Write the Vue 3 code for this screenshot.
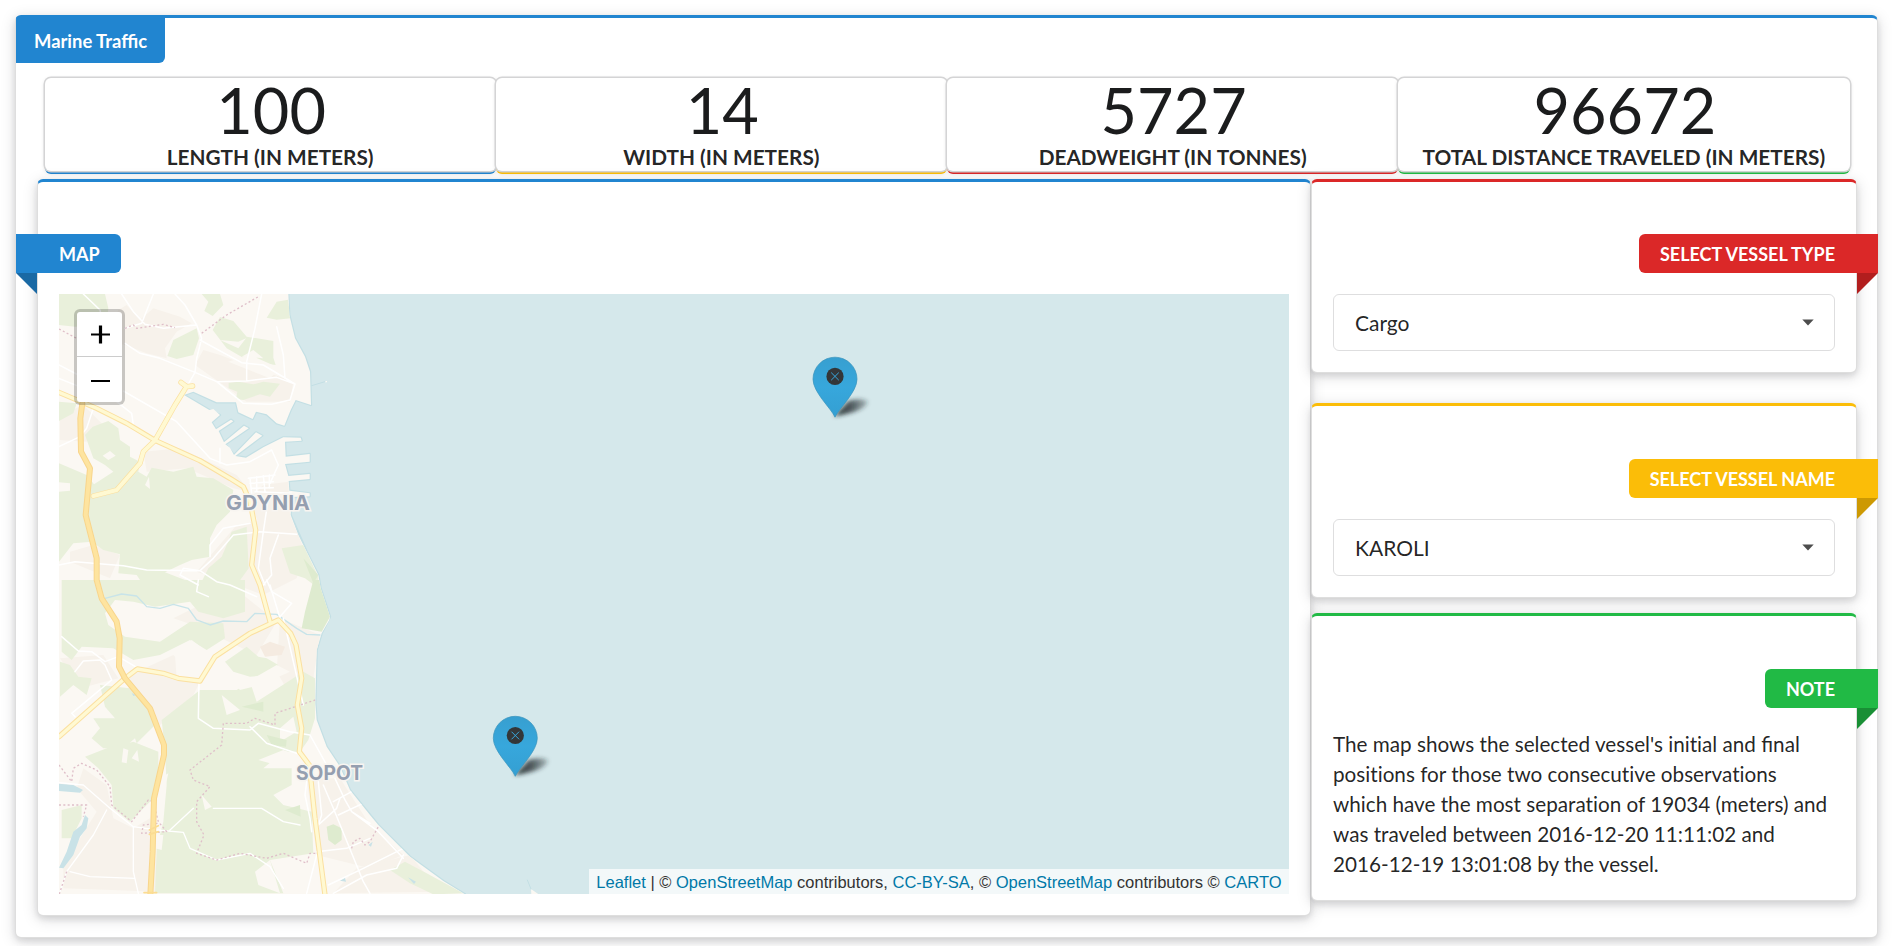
<script setup>
const stats = [
  { value: '100', label: 'LENGTH (IN METERS)', color: 'blue' },
  { value: '14', label: 'WIDTH (IN METERS)', color: 'yellow' },
  { value: '5727', label: 'DEADWEIGHT (IN TONNES)', color: 'red' },
  { value: '96672', label: 'TOTAL DISTANCE TRAVELED (IN METERS)', color: 'green' },
]
const selects = [
  { title: 'SELECT VESSEL TYPE', value: 'Cargo', color: 'red' },
  { title: 'SELECT VESSEL NAME', value: 'KAROLI', color: 'yellow' },
]
const markers = [
  { x: 835, y: 417.2 },
  { x: 515.3, y: 776.3 },
]
</script>

<template>
  <main class="segment page blue">
    <div class="corner-label">Marine Traffic</div>

    <section class="stats">
      <div v-for="s in stats" :key="s.label" class="stat" :class="s.color">
        <div class="stat-value">{{ s.value }}</div>
        <div class="stat-label">{{ s.label }}</div>
      </div>
    </section>

    <section class="columns">
      <article class="segment map-card blue">
        <div class="ribbon left">MAP</div>
        <div class="map">
          <svg class="map-canvas" viewBox="59 294 1230 600" width="1230" height="600">
            <defs>
              <filter id="soft" x="-50%" y="-50%" width="200%" height="200%">
                <feGaussianBlur stdDeviation="1.9" />
              </filter>
              <linearGradient id="shade" x1="0" y1="0" x2="1" y2="0">
                <stop offset="0" stop-color="#20292c" stop-opacity=".9" />
                <stop offset=".5" stop-color="#20292c" stop-opacity=".75" />
                <stop offset="1" stop-color="#20292c" stop-opacity=".25" />
              </linearGradient>
              <linearGradient id="pin" x1="0" y1="0" x2="0" y2="1">
                <stop offset="0" stop-color="#379fd0" />
                <stop offset=".5" stop-color="#37a7dc" />
                <stop offset="1" stop-color="#349fd2" />
              </linearGradient>
              <clipPath id="coast">
                <path d="M0 0H714L718 90L735 160L765 215L780 260L783 360L737 345L722 375L703 422L680 415L650 388L618 380L608 402L565 382L558 352L500 352L430 320L402 330L478 375L490 372L510 390L485 412L498 433L543 404L550 409L506 438L522 472L582 422L596 430L526 478L540 488L552 510L618 442L637 452L556 513L588 518L640 487L700 457L752 458L755 467L705 470L707 515L779 507V530L705 537L715 573L779 567V582L716 588L718 617L779 625V634L724 636L722 690L745 750L770 800L805 870L812 910L840 995L838 1005L815 1045L800 1095L796 1255L800 1305L830 1385L870 1445L900 1515L960 1590L985 1620L1080 1715L1180 1788L1245 1828H0Z" />
              </clipPath>
            </defs>
            <rect x="59" y="294" width="1230" height="600" fill="#d5e8eb" />
            <g transform="translate(50 285) scale(.33333)" fill="none" stroke-linejoin="round" stroke-linecap="round">
              <path d="M714 20L718 90L735 160L765 215L780 260L783 360L737 345L722 375L703 422L680 415L650 388L618 380L608 402L565 382L558 352L500 352L430 320L402 330L478 375L510 390L485 412L498 433L543 404L550 409L506 438L522 472L582 422L596 430L526 478L552 510L618 442L637 452L556 513L588 518L640 487L700 457L752 458L755 467L705 470L707 515L779 507V530L705 537L715 573L779 567V582L716 588L718 617L779 625V634L724 636L722 690L770 800L805 870L812 910L840 995L815 1045L800 1095L796 1255L800 1305L830 1385L870 1445L900 1515L985 1620L1080 1715L1180 1788L1245 1828" stroke="#c3dfe4" stroke-width="7" />
              <g clip-path="url(#coast)">
                <rect width="1260" height="1840" fill="#fbf8f3" />
                <g fill="#f7f2eb">
                  <path d="M160 170L205 75L230 60L270 105L310 70L390 95L425 115L380 140L345 190L350 220L290 205L225 180ZM435 240L460 195L510 210L590 240L730 290L720 350L590 350L520 300ZM30 390L100 360L160 420L110 470L30 465ZM280 500L390 490L560 570L600 620L550 610L410 550L290 560ZM60 800L130 780L210 810L180 880L60 830ZM440 860L560 720L720 690L765 800L740 880L640 930L560 900ZM640 600L715 590L720 690L630 730L600 640Z" />
                  <path d="M370 1000L450 960L580 930L680 1010L620 1110L430 1020ZM690 1000L810 1050L790 1180L750 1280L680 1160ZM240 1170L370 1110L450 1190L430 1230L330 1320L230 1240ZM30 1120L160 1110L205 1180L90 1210ZM100 1450L170 1500L190 1600L250 1630L300 1600L330 1820L40 1810L40 1740L140 1580L80 1510ZM770 1480L870 1480L960 1620L1060 1710L960 1750L800 1710Z" />
                  <path d="M815 1600L930 1580L1010 1680L860 1690ZM920 1750L1080 1710L1170 1820L850 1825Z" />
                </g>
                <g fill="#e9f0db">
                  <path d="M27 27H165L175 70L170 120L75 125L27 120ZM455 27H510L520 60L488 93L463 78L475 50ZM650 98L680 50L714 44L722 100L680 104ZM488 135L510 96L550 108L590 155L670 168V218L677 240L600 230L530 190ZM370 165L440 130L447 160L430 210L380 222L352 213ZM536 294L565 290L610 298L640 290L690 296L660 335L630 328L580 345L558 342L562 320L536 310ZM27 350L80 355L70 385L27 408Z" />
                  <path d="M105 450L128 425L175 408L205 430L210 465L240 485L240 515L270 530L265 560L290 575L305 548L370 560L430 545L440 575L490 580L550 615L540 680L500 720L480 760L480 815L425 825L390 840L345 862L405 885L440 900L280 900L260 870L205 865L210 808L160 795L125 770L70 775L27 830V620L60 617V595L27 592V535L110 570L132 598L190 560L165 540L130 520Z" />
                  <path d="M515 815L530 780L545 740L590 725L596 850L560 900H450L475 850ZM695 790L760 780L805 875V910L765 880L720 865Z" />
                  <path d="M35 885H490L585 885V980L520 1000L445 980L420 950L315 965L250 950L195 945L165 985L175 1020L225 1055L330 1070L420 1010L520 1015L525 1060L470 1095L420 1065L330 1110L250 1125L190 1090L95 1085L65 1125L35 1100ZM150 1200L240 1210L300 1280L315 1320L260 1375L255 1360L220 1390L160 1390L125 1360L150 1330L130 1300L195 1300L165 1265Z" />
                  <path d="M525 1130L590 1085L625 1115L650 1120L685 1140L660 1170L600 1175L550 1160ZM335 1305L450 1215L560 1215L600 1190L620 1250L760 1160L795 1180V1300L775 1365L750 1400L700 1400L640 1450L725 1450V1500L670 1530L700 1560L785 1580L790 1705L660 1725L700 1825H315L320 1690L340 1610L350 1500L345 1400Z" />
                  <path d="M105 1415L170 1390L250 1370L325 1400L325 1520L305 1545L240 1610L190 1570L185 1500L145 1450ZM30 1130L60 1140L85 1175L125 1180L110 1230L70 1200L30 1235ZM35 1575L95 1560L95 1600L65 1660L35 1660ZM1020 1755L1065 1730L1130 1765L1240 1825L1150 1828L1080 1795Z" />
                </g>
                <g fill="#fbf8f3">
                  <path d="M158 512L180 498L197 512L175 525ZM565 170L588 160L565 190L510 165ZM575 215L610 195L640 220ZM285 600L297 575L300 612ZM535 230L600 210L690 250L660 280ZM220 1390L235 1395L230 1435L215 1432ZM262 1395L267 1430L245 1420ZM515 1230L570 1275L530 1290ZM455 1530L485 1565L465 1575ZM330 1480L355 1465L345 1510ZM340 980L360 975L345 990Z" />
                  <path d="M625 1425L700 1395L740 1410L730 1450L660 1435ZM690 1330L730 1295L740 1340L690 1370ZM530 1170L610 1180L680 1140L720 1160L630 1200L570 1215ZM615 1760L660 1725L690 1825L625 1800ZM375 1110L425 1065L465 1095L455 1190L380 1180ZM310 1650L340 1650L335 1695L315 1690Z" />
                </g>
                <g fill="#deebcf">
                  <path d="M765 980L790 885H812L840 995L815 1040L755 1030ZM830 1625L850 1618L875 1630L875 1665L855 1680L835 1665ZM650 1350L710 1365L708 1385L665 1380ZM705 1575L750 1560L752 1595ZM575 1265L640 1250L640 1280ZM760 820L805 870L790 895Z" />
                </g>
                <path fill="#f5ebe1" d="M630 1085L660 1070L705 1085L695 1110L645 1115Z" />
                <g fill="#c9e2e7">
                  <path d="M27 1496L70 1500L99 1515L90 1523L27 1518ZM105 1590L115 1600L110 1630L90 1655L70 1710L40 1750L27 1748L50 1700L70 1640L95 1620ZM870 1787L885 1778L888 1790ZM245 1225L262 1230L250 1233ZM1074 1777L1098 1790L1092 1797ZM955 1680L968 1670L963 1685Z" />
                </g>
                <path stroke="#c8e4e9" stroke-width="4" d="M165 940L215 927L260 933L290 965L330 970L370 958L415 970L440 1005L480 1020L520 1008L590 1010L615 985L680 988L740 1030L770 1048L810 1050" />
                <g stroke="#ffffff" stroke-width="4.5">
                  <path d="M100 27L150 75L160 130M215 27L250 80L285 118L340 130L440 120L455 160L440 220L435 262L405 315M310 27L275 115L225 130M375 27L405 60L440 120M635 27L615 130L590 230V285M450 165L575 233L640 240L735 297L720 345L665 358L580 355L500 290L435 262L330 220L270 205L225 175M500 290L590 288L680 277L735 297M680 125L700 210L705 280" />
                  <path d="M27 240L85 270M27 280L200 350L245 385L250 420M220 318L380 410L480 520L530 540L600 530L665 495M665 495L685 540L660 595M27 485L90 455L110 430L130 370M510 490V535M595 580L675 570M600 595L670 590M605 610L670 608M600 580L605 625M620 575V620M640 572L645 620M658 570V610M615 620L724 625M655 640L640 740L625 850L645 900" />
                  <path d="M27 840L75 830L220 842L290 855L450 857L490 820L550 750L630 740L740 748M600 715L520 730L480 780L480 815M450 857L400 850L390 870L445 900M450 857L500 890L540 900L620 935M685 750L660 820L665 870L640 900" />
                  <path d="M35 1055L85 1098L125 1100L165 1130L205 1115L265 1150M75 1160L100 1128L150 1125L165 1140L185 1185L65 1285L75 1295M447 1190L445 1300L490 1330L600 1335L625 1315L720 1340L780 1350L830 1440M600 1325L650 1375L740 1405M445 885L440 920L475 935M650 885L665 920L725 955L690 995" />
                  <path d="M27 1493L100 1500L180 1570L250 1625L320 1635L400 1642L420 1690L500 1725L600 1705L660 1745L700 1810M170 1575L130 1650L50 1760L30 1820M250 1625V1760L265 1825M60 1760L120 1775L255 1780M360 1635L430 1570M490 1570L530 1570L635 1570L700 1610L750 1620" stroke-width="4" />
                  <path d="M770 1490L765 1530L780 1600L785 1640M805 1490L815 1590L805 1620L860 1570L870 1540M820 1500L850 1570L940 1790L960 1825M855 1480L885 1545L905 1580L960 1615M850 1550L905 1520M800 1700L890 1690L960 1660M800 1710L770 1825M835 1800L940 1750L1060 1690M850 1825L950 1770L1040 1750L1060 1710M905 1580L985 1640L1060 1720M865 1590L950 1550M660 900L690 1000L740 1090M700 1000L760 1260" />
                </g>
                <g stroke="#dfbfc9" stroke-width="4" stroke-dasharray="6 7" stroke-linecap="butt">
                  <path d="M27 132L80 160M455 145L530 90L625 35M225 130L250 120L260 130L340 118L375 128" />
                  <path d="M796 1245L675 1285V1320L615 1300L590 1315L520 1315L515 1380L420 1455L430 1485L480 1505L440 1550V1610L462 1650L440 1705L500 1725L570 1705L650 1720L700 1705L770 1735L780 1705L800 1705M27 1440L65 1490L70 1450L95 1435L140 1455L180 1505L185 1560L245 1610L295 1545L310 1550L325 1610L350 1640L275 1645L280 1620L325 1615M27 1560L110 1560L100 1595M50 1760L27 1830M905 1690L910 1670L930 1660L945 1680L960 1670L985 1625" />
                </g>
                <g stroke="#fbe0a0" stroke-width="16">
                  <path d="M27 322L140 370L230 415L315 466L450 527L540 580L580 605L600 650L617 735L605 840L630 900L660 1010" />
                  <path d="M405 312L375 360L315 466L280 500L270 535L200 615L130 633M393 292L410 305L428 303" />
                  <path d="M27 1355L225 1180L262 1152L340 1165L385 1180L450 1188L495 1115L600 1045L685 1005L722 1045L738 1080L755 1180L742 1260L755 1330L748 1400L778 1440L795 1600L825 1830" />
                </g>
                <g stroke="#fff9d2" stroke-width="10">
                  <path d="M27 322L140 370L230 415L315 466L450 527L540 580L580 605L600 650L617 735L605 840L630 900L660 1010" />
                  <path d="M405 312L375 360L315 466L280 500L270 535L200 615L130 633M393 292L410 305L428 303" stroke-width="12" />
                  <path d="M27 1355L225 1180L262 1152L340 1165L385 1180L450 1188L495 1115L600 1045L685 1005L722 1045L738 1080L755 1180L742 1260L755 1330L748 1400L778 1440L795 1600L825 1830" />
                </g>
                <path stroke="#f8d58c" stroke-width="18" d="M97 355L91 400L93 500L120 550L107 690L140 820V885L155 940L200 1010L209 1060L207 1145L225 1180L300 1270L342 1380V1410L312 1540L308 1700L301 1830" />
                <path stroke="#fee49f" stroke-width="12" d="M97 355L91 400L93 500L120 550L107 690L140 820V885L155 940L200 1010L209 1060L207 1145L225 1180L300 1270L342 1380V1410L312 1540L308 1700L301 1830" />
                <path stroke="#fbdc92" stroke-width="5" d="M298 1635L325 1622M298 1648L325 1640M282 1823H320" />
              </g>
              <path fill="#fbf8f3" d="M1443 1812L1466 1828H1444ZM825 288H831V292H825Z" />
              <path stroke="#c3dfe4" stroke-width="3" d="M1432 1785L1443 1812M785 302L825 290" />
            </g>
            <g class="place">
              <text x="226" y="510" textLength="84" lengthAdjust="spacingAndGlyphs">GDYNIA</text>
              <text x="296" y="779.8" textLength="67" lengthAdjust="spacingAndGlyphs">SOPOT</text>
            </g>
            <g v-for="m in markers" :key="m.x" :transform="`translate(${m.x} ${m.y})`">
              <path d="M-1 -1L13 -16Q25 -20 33 -16Q31 -9 18 -5Q8 -2 -1 -1Z" fill="url(#shade)" filter="url(#soft)" />
              <path d="M0 0C-4 -9 -22 -25 -22 -38A22 22 0 0 1 22 -38C22 -25 4 -9 0 0Z" fill="url(#pin)" stroke="#3a93bc" stroke-width=".7" />
              <circle cy="-40.8" r="8.6" fill="#333638" />
              <path d="M-3.8 -44.6L3.8 -37M3.8 -44.6L-3.8 -37" stroke="#37a7dc" stroke-width="1" />
            </g>
          </svg>

          <div class="zoom">
            <div class="zoom-btn">
              <svg width="19" height="19" viewBox="0 0 19 19"><path d="M0 9.5H19" stroke="#000" stroke-width="2" /><path d="M9.5 .5V18.5" stroke="#000" stroke-width="3.2" /></svg>
            </div>
            <div class="zoom-btn">
              <svg width="19" height="19" viewBox="0 0 19 19"><path d="M0 10H19" stroke="#000" stroke-width="2" /></svg>
            </div>
          </div>
          <div class="attribution"><a>Leaflet</a> | © <a>OpenStreetMap</a> contributors, <a>CC-BY-SA</a>, © <a>OpenStreetMap</a> contributors © <a>CARTO</a></div>
        </div>
      </article>

      <div class="side">
        <article v-for="s in selects" :key="s.title" class="segment side-card" :class="s.color">
          <div class="ribbon right">{{ s.title }}</div>
          <div class="dropdown">
            <span>{{ s.value }}</span>
            <svg width="12" height="7" viewBox="0 0 12 7"><path d="M.3 .5H11.7L6 6.6Z" fill="#4d4d4d" /></svg>
          </div>
        </article>
        <article class="segment side-card note green">
          <div class="ribbon right">NOTE</div>
          <p class="note-text">The map shows the selected vessel's initial and <span class="lig">final</span> positions for those two consecutive observations which have the most separation of 19034 (meters) and was traveled between 2016-12-20 11:11:02 and 2016-12-19 13:01:08 by the vessel.</p>
        </article>
      </div>
    </section>
  </main>
</template>

<style>
html {
  background: #fff;
  overflow: hidden;
}
#app {
  display: flow-root;
}
</style>

<style scoped>
* {
  box-sizing: border-box;
}
.blue { --c: #2185d0; --dark: #1a69a4; }
.red { --c: #db2828; --dark: #b21e1e; }
.yellow { --c: #fbbd08; --dark: #cd9903; }
.green { --c: #21ba45; --dark: #198f35; }

.segment {
  position: relative;
  background: #fff;
  border: 1px solid rgba(34, 36, 38, .15);
  border-top: 3px solid var(--c);
  border-radius: 6px;
  box-shadow: 0 3px 6px 0 rgba(34, 36, 38, .12), 0 3px 15px 0 rgba(34, 36, 38, .15);
}
.page {
  width: 1863px;
  height: 923px;
  margin: 15px 0 8px 15px;
  padding: 60px 20px 0 21px;
  font-family: Lato, "Liberation Sans", sans-serif;
  font-size: 21px;
  line-height: 30px;
  color: rgba(0, 0, 0, .87);
}
.corner-label {
  position: absolute;
  left: 0;
  top: -2px;
  width: 149px;
  height: 47px;
  padding: 16px 0 0 18px;
  border-radius: 4px 0 6px 0;
  background: #2185d0;
  color: #fff;
  font-size: 18.4px;
  font-weight: 700;
  line-height: 18px;
  white-space: nowrap;
}
.stats {
  display: flex;
  height: 93px;
  margin: 0 7.5px 8px;
}
.stat {
  flex: 1 1 0;
  text-align: center;
  background: #fff;
  border-radius: 6px;
  box-shadow: 0 0 0 1.5px #d4d4d5, 0 3px 0 0 var(--c), 0 1.5px 4.5px 0 #d4d4d5;
  white-space: nowrap;
}
.stat-value {
  padding-left: 2px;
  font-size: 63px;
  line-height: 63px;
  color: #1b1c1d;
}
.stat-label {
  padding-top: 1px;
  font-size: 20.8px;
  font-weight: 700;
  line-height: 30px;
}
.columns {
  display: flex;
  align-items: flex-start;
}
.map-card {
  width: 1274px;
  height: 737px;
  padding: 52px 20px 0 21px;
}
.side {
  width: 546px;
  flex: none;
  display: flex;
  flex-direction: column;
}
.side-card {
  padding: 52px 21px 21px;
}
.side-card + .side-card {
  margin-top: 30px;
  padding-top: 53px;
}
.side-card + .side-card.note {
  margin-top: 15px;
}
.ribbon {
  position: relative;
  width: max-content;
  height: 39px;
  margin-bottom: 21px;
  background: var(--c);
  color: #fff;
  font-size: 18px;
  font-weight: 700;
  line-height: 18px;
  white-space: nowrap;
}
.ribbon::after {
  content: "";
  position: absolute;
  top: 100%;
  width: 21px;
  height: 21px;
  background: var(--dark);
}
.ribbon.left {
  margin-left: -43px;
  padding: 10.5px 21px 10.5px 43px;
  border-radius: 0 6px 6px 0;
}
.ribbon.left::after {
  left: 0;
  clip-path: polygon(0 0, 100% 0, 100% 100%);
}
.ribbon.right {
  margin-left: auto;
  margin-right: -43px;
  padding: 10.5px 43px 10.5px 21px;
  border-radius: 6px 0 0 6px;
}
.ribbon.right::after {
  right: 0;
  clip-path: polygon(0 0, 100% 0, 0 100%);
}
.map {
  position: relative;
  width: 1230px;
  height: 600px;
  overflow: hidden;
}
.map-canvas {
  display: block;
}
.place {
  font-family: Inter, sans-serif;
  font-size: 20px;
  font-weight: 700;
  fill: #959fb0;
  stroke: #f8f5f1;
  stroke-width: 3px;
  paint-order: stroke;
}
.zoom {
  position: absolute;
  left: 15px;
  top: 15px;
  width: 51px;
  height: 96px;
  border: 3px solid rgba(0, 0, 0, .2);
  border-radius: 6px;
  background: #fff;
  background-clip: padding-box;
}
.zoom-btn {
  display: flex;
  align-items: center;
  justify-content: center;
  height: 45px;
  padding: 1px 0 0 2px;
}
.zoom-btn:first-child {
  border-bottom: 1px solid #ccc;
}
.attribution {
  position: absolute;
  right: 0;
  bottom: 0;
  height: 25px;
  padding: 1px 7.5px 0;
  background: rgba(255, 255, 255, .7);
  color: #333;
  font-family: "Liberation Sans", Arial, sans-serif;
  font-size: 16.5px;
  line-height: 25px;
  white-space: nowrap;
}
.attribution a {
  color: #0078a8;
}
.dropdown {
  display: flex;
  align-items: center;
  justify-content: space-between;
  height: 57px;
  padding: 0 20px 0 21px;
  border: 1px solid rgba(34, 36, 38, .15);
  border-radius: 6px;
}
.note-text {
  margin: 0;
  font-size: 20.7px;
  font-variant-ligatures: no-common-ligatures;
}
.lig {
  font-variant-ligatures: common-ligatures;
}
</style>
